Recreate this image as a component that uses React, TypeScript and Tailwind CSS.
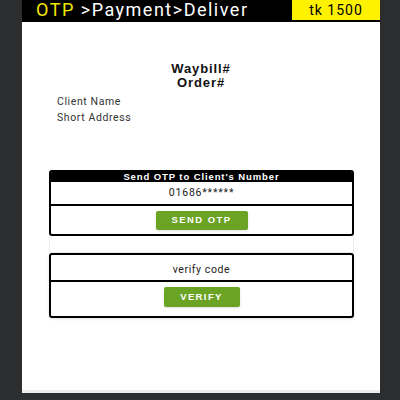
export default function App() {
  return (
    <div className="w-[400px] h-[400px] bg-[#2c2d2f] flex flex-col items-start font-['Roboto',sans-serif]">
      <div className="ml-[22px] w-[358px] h-[393px] bg-white flex flex-col">
        {/* Top bar */}
        <div className="h-[22px] bg-black flex items-stretch">
          <div className="flex-1 pl-[14px] text-[18px] leading-[20px] tracking-[1.5px] text-white">
            <span className="text-[#f2e600]">OTP</span> &gt;Payment&gt;Deliver
          </div>
          <div className="w-[88px] h-[20px] bg-[#fff200] text-black text-[14px] leading-[20px] tracking-[1px] text-center">tk 1500</div>
        </div>

        {/* Order info */}
        <div className="mt-[40px] text-center font-bold text-[13px] leading-[14px] tracking-[0.9px] text-[#111] font-['Liberation_Sans',sans-serif]">
          <div>Waybill#</div>
          <div>Order#</div>
        </div>
        <div className="mt-[4px] pl-[35px] text-[10.5px] tracking-[0.6px] text-[#333] leading-[16px]">
          <div>Client Name</div>
          <div>Short Address</div>
        </div>

        {/* Send OTP card */}
        <div className="mt-[44px] mx-[27px] w-[305px]">
          <div className="border-2 border-black rounded-[3px] overflow-hidden">
            <div className="h-[10px] bg-black text-white text-[9.5px] leading-[10px] tracking-[0.9px] font-bold text-center font-['Liberation_Sans',sans-serif]">
              Send OTP to Client's Number
            </div>
            <div className="h-[24px] border-b-2 border-black flex items-center justify-center text-[10.5px] text-[#222] tracking-[0.8px]">
              01686******
            </div>
            <div className="h-[28px] flex items-center justify-center">
              <div className="w-[92px] h-[19px] rounded-[2px] bg-[#6ba324] text-white text-[9.5px] font-bold tracking-[1.4px] flex items-center justify-center shadow-sm font-['Liberation_Sans',sans-serif]">
                SEND OTP
              </div>
            </div>
          </div>
          <div className="h-[17px] border-x border-b border-[#ececec]" />
        </div>

        {/* Verify card */}
        <div className="mx-[27px] w-[305px] border-2 border-black rounded-[3px] shadow-sm">
          <div className="h-[27px] border-b-2 border-black flex items-end justify-center pb-[2px] text-[10.5px] tracking-[0.6px] text-[#222]">
            verify code
          </div>
          <div className="h-[34px] flex items-start justify-center pt-[5px]">
            <div className="w-[76px] h-[20px] rounded-[2px] bg-[#6ba324] text-white text-[9.5px] font-bold tracking-[1.4px] flex items-center justify-center shadow-sm font-['Liberation_Sans',sans-serif]">
              VERIFY
            </div>
          </div>
        </div>

        <div className="flex-1" />
        <div className="h-[3px] bg-[#ececec]" />
      </div>
    </div>
  );
}
